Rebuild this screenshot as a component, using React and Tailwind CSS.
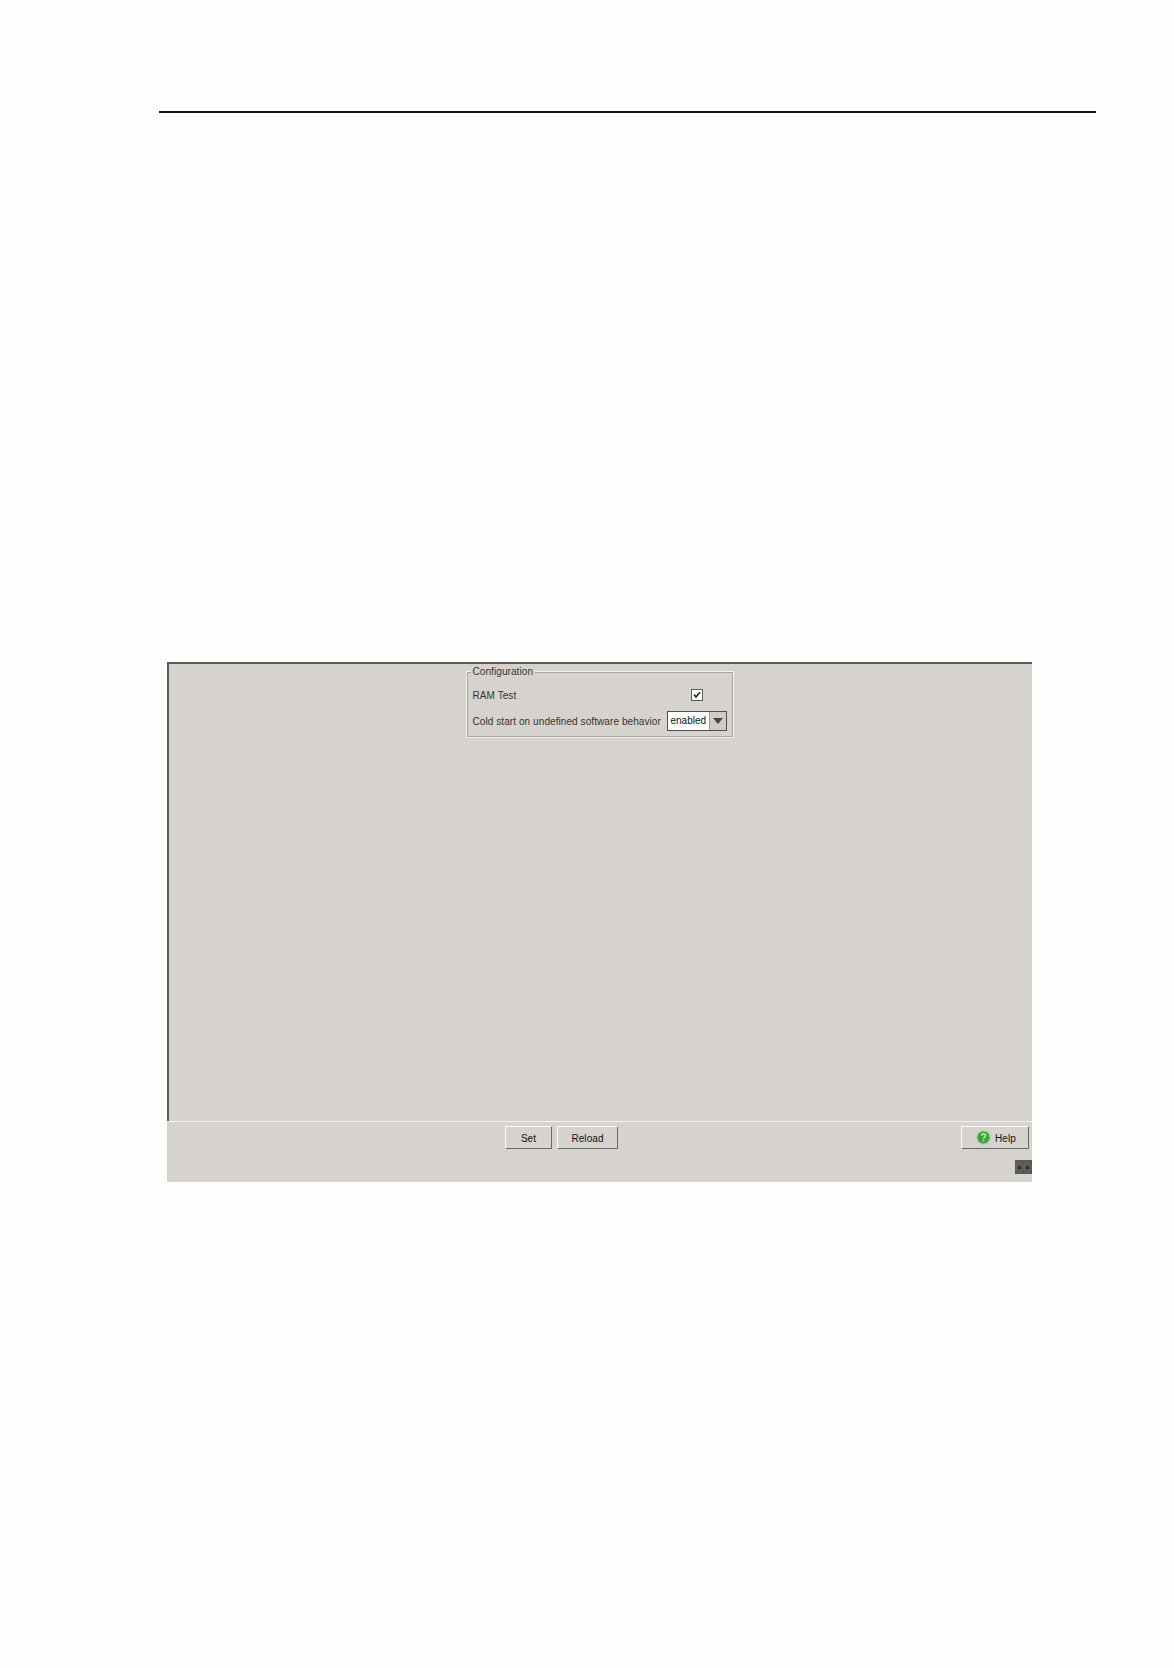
import React from 'react';

function Button({ className, children }) {
  return (
    <div className={`h-[23px] pt-[1px] flex items-center justify-center text-[10px] tracking-[0.08px] text-[#111] border-[1.5px] border-t-white border-l-white border-r-[#6a6a66] border-b-[#6a6a66] ${className}`}>
      {children}
    </div>
  );
}

function HelpIcon() {
  return (
    <svg width="15" height="15" viewBox="0 0 14 14" className="mr-[4px] ml-[2px] mt-[-1px]">
      <circle cx="7" cy="7" r="6.8" fill="#a9cfa3" />
      <circle cx="7" cy="7" r="5.6" fill="#3ba334" />
      <path d="M5.2 5.4c0-2.2 3.7-2.2 3.7 0 0 1.4-1.9 1.3-1.9 2.8" fill="none" stroke="#cfeccb" strokeWidth="1.3" />
      <rect x="6.3" y="9.2" width="1.4" height="1.4" fill="#cfeccb" />
    </svg>
  );
}

export default function App() {
  return (
    <div className="h-[1668px] bg-[#fefefe] pt-[111px] font-['Liberation_Sans',Arial,sans-serif]">
      <div className="ml-[159px] w-[937px] h-[1.5px] bg-[#111]" />

      <div className="ml-[167px] mt-[549.5px] w-[865px] h-[520px] flex flex-col bg-[#d6d3ce]">
        {/* main area */}
        <div className="h-[459px] border-t-2 border-l-2 border-[#5c5c58] flex justify-center">
          <div className="relative mt-[7px] ml-[-2px] w-[268px] h-[67px] border border-[#f3f2ef] outline outline-1 outline-[#a8a6a1] -outline-offset-2 pl-[6px] pr-[5px] text-[10px] tracking-[0.08px] text-[#333]">
            <span className="absolute left-[4px] top-[-7px] bg-[#d6d3ce] px-[2px] leading-[13px]">Configuration</span>
            <div className="flex items-center h-[24px] mt-[11px]">
              <span className="w-[218px]">RAM Test</span>
              <div className="w-[12px] h-[12px] bg-white border border-[#5c5c58] flex items-center justify-center">
                <svg width="8" height="8" viewBox="0 0 8 8">
                  <path d="M1 3.5 3 6 7 1.2" fill="none" stroke="#222" strokeWidth="1.5" />
                </svg>
              </div>
            </div>
            <div className="flex items-center h-[24px] mt-[2px]">
              <span className="w-[194px] whitespace-nowrap">Cold start on undefined software behavior</span>
              <div className="w-[60px] h-[20px] flex border border-t-[1.5px] border-l-[1.5px] border-[#4f4f4b] bg-white">
                <span className="flex-1 pl-[3px] leading-[18px] text-[#111] tracking-normal">enabled</span>
                <div className="w-[17px] bg-[#cfccc7] border-l border-[#9a9893] flex items-center justify-center">
                  <svg width="10" height="6" viewBox="0 0 10 6">
                    <path d="M0 0h10L5 6z" fill="#444" />
                  </svg>
                </div>
              </div>
            </div>
          </div>
        </div>

        {/* footer */}
        <div className="flex-1 border-t border-[#f3f2ef] flex flex-col">
          <div className="flex mt-[4px] pl-[338px]">
            <Button className="w-[47px]">Set</Button>
            <Button className="w-[61px] ml-[5px]">Reload</Button>
            <Button className="w-[68px] ml-[343px]"><HelpIcon />Help</Button>
          </div>
          <div className="flex justify-end mt-[11px]">
            <div className="w-[17px] h-[14px] bg-[#5a5a56] flex items-center justify-end gap-[1px] pr-[1px]">
              <div className="w-[7px] h-[7px] rounded-full bg-[#3a3a38] border border-[#777773]" />
              <div className="w-[7px] h-[7px] rounded-full bg-[#3a3a38] border border-[#777773]" />
            </div>
          </div>
        </div>
      </div>
    </div>
  );
}
